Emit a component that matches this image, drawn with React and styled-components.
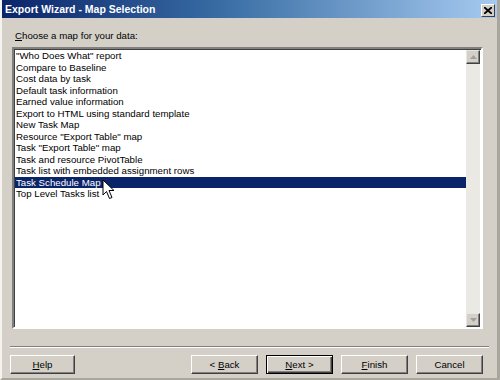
import React from "react";
import styled, { createGlobalStyle } from "styled-components";

const GlobalStyle = createGlobalStyle`
    html, body {
        margin: 0;
        padding: 0;
        background: #d4d0c8;
    }
    body {
        font-family: "Liberation Sans", Arial, sans-serif;
    }
`

const StyledWindow = styled.div`
    position: relative;
    box-sizing: border-box;
    width: 500px;
    height: 380px;
    display: flex;
    flex-direction: column;
    background: #d4d0c8;
    border-left: 2px solid #f4f3ee;
    border-right: 3px solid #a9a69e;
    border-bottom: 2px solid #a9a69e;
    overflow: hidden;
`

const StyledTitleBar = styled.div`
    height: 18px;
    display: flex;
    align-items: center;
    justify-content: space-between;
    padding: 0 2px 0 3px;
    background: linear-gradient(to right, #0a246a 0%, #3a6ea5 45%, #a6caf0 100%);
    color: #ffffff;
    font-family: "Liberation Sans", Arial, sans-serif;
    font-weight: bold;
    font-size: 10.5px;
`

const StyledCloseButton = styled.div`
    box-sizing: border-box;
    width: 14px;
    height: 13px;
    margin-top: 3px;
    display: flex;
    align-items: center;
    justify-content: center;
    background: #d4d0c8;
    border: 1px solid;
    border-color: #ffffff #404040 #404040 #ffffff;
`

const StyledBody = styled.div`
    flex: 1;
    display: flex;
    flex-direction: column;
    padding: 11px 14px 0 10px;
`

const StyledLabel = styled.div`
    font-size: 9.7px;
    line-height: 13px;
    color: #000000;
    padding-left: 3px;
    margin-bottom: 5px;
`

const Underline = styled.span`
    text-decoration: underline;
`

const StyledListBox = styled.div`
    position: relative;
    box-sizing: border-box;
    height: 282px;
    display: flex;
    background: #ffffff;
    border: 2px solid;
    border-color: #808080 #ffffff #ffffff #808080;
    box-shadow: inset 1px 1px 0 #404040;
`

const StyledItems = styled.div`
    flex: 1;
    padding-top: 1px;
    padding-left: 1px;
`

const StyledItem = styled.div`
    height: 11.5px;
    line-height: 11.5px;
    padding-left: 1px;
    font-size: 9.7px;
    white-space: nowrap;
    color: ${(p) => (p.$selected ? "#ffffff" : "#000000")};
    background: ${(p) => (p.$selected ? "#0a246a" : "transparent")};
`

const StyledScrollBar = styled.div`
    width: 14px;
    display: flex;
    flex-direction: column;
    justify-content: space-between;
    background: #ebe9e4;
    margin: 1px 1px 0 0;
`

const StyledScrollButton = styled.div`
    box-sizing: border-box;
    width: 14px;
    height: 14px;
    display: flex;
    align-items: center;
    justify-content: center;
    background: #d4d0c8;
    border: 1px solid;
    border-color: #e8e6e0 #404040 #404040 #e8e6e0;
    box-shadow: inset -1px -1px 0 #808080;
`

const StyledSeparator = styled.div`
    margin: 17px -6px 0 -2px;
    height: 1px;
    background: #808080;
    border-bottom: 1px solid #ffffff;
`

const StyledButtonRow = styled.div`
    display: flex;
    gap: 8px;
    margin-top: 7px;
    margin-left: -2px;
`

const Spacer = styled.div`
    flex: 1;
`

const StyledButton = styled.div`
    box-sizing: border-box;
    width: ${(p) => p.$width || 67}px;
    height: 19px;
    display: flex;
    align-items: center;
    justify-content: center;
    font-size: 9.7px;
    color: #000000;
    background: #d4d0c8;
    border: 1px solid;
    border-color: ${(p) => (p.$default ? "#000000" : "#ffffff #404040 #404040 #ffffff")};
    box-shadow: ${(p) =>
        p.$default
            ? "inset 1px 1px 0 #ffffff, inset -1px -1px 0 #404040, inset -2px -2px 0 #808080"
            : "inset -1px -1px 0 #808080"};
`

const StyledCursor = styled.svg`
    position: absolute;
    left: 88px;
    top: 130px;
`

const maps = [
    "\"Who Does What\" report",
    "Compare to Baseline",
    "Cost data by task",
    "Default task information",
    "Earned value information",
    "Export to HTML using standard template",
    "New Task Map",
    "Resource \"Export Table\" map",
    "Task \"Export Table\" map",
    "Task and resource PivotTable",
    "Task list with embedded assignment rows",
    "Task Schedule Map",
    "Top Level Tasks list",
]

function App() {
    const selected = 11

    return (
        <>
            <GlobalStyle />
            <StyledWindow>
                <StyledTitleBar>
                    <span>Export Wizard - Map Selection</span>
                    <StyledCloseButton>
                        <svg width="8" height="7" viewBox="0 0 8 7">
                            <path d="M0 0 L8 7 M8 0 L0 7" stroke="#000" strokeWidth="1.8" />
                        </svg>
                    </StyledCloseButton>
                </StyledTitleBar>
                <StyledBody>
                    <StyledLabel>
                        <Underline>C</Underline>hoose a map for your data:
                    </StyledLabel>
                    <StyledListBox>
                        <StyledItems>
                            {maps.map((name, index) => (
                                <StyledItem key={name} $selected={index === selected}>
                                    {name}
                                </StyledItem>
                            ))}
                        </StyledItems>
                        <StyledScrollBar>
                            <StyledScrollButton>
                                <svg width="7" height="4" viewBox="0 0 7 4">
                                    <path d="M3.5 0 L7 4 L0 4 Z" fill="#a0a0a0" />
                                </svg>
                            </StyledScrollButton>
                            <StyledScrollButton>
                                <svg width="7" height="4" viewBox="0 0 7 4">
                                    <path d="M0 0 L7 0 L3.5 4 Z" fill="#a0a0a0" />
                                </svg>
                            </StyledScrollButton>
                        </StyledScrollBar>
                        <StyledCursor width="14" height="22" viewBox="0 0 14 22">
                            <path
                                d="M1 1 L1 16 L4.5 12.5 L7.5 19.5 L10 18.5 L7 11.5 L12 11.5 Z"
                                fill="#ffffff"
                                stroke="#000000"
                                strokeWidth="1"
                                strokeLinejoin="miter"
                            />
                        </StyledCursor>
                    </StyledListBox>
                    <StyledSeparator />
                    <StyledButtonRow>
                        <StyledButton $width={65}>
                            <span><Underline>H</Underline>elp</span>
                        </StyledButton>
                        <Spacer />
                        <StyledButton>
                            <span>&lt; <Underline>B</Underline>ack</span>
                        </StyledButton>
                        <StyledButton $default>
                            <span><Underline>N</Underline>ext &gt;</span>
                        </StyledButton>
                        <StyledButton>
                            <span><Underline>F</Underline>inish</span>
                        </StyledButton>
                        <StyledButton>
                            <span>Cancel</span>
                        </StyledButton>
                    </StyledButtonRow>
                </StyledBody>
            </StyledWindow>
        </>
    )
}

export default App
